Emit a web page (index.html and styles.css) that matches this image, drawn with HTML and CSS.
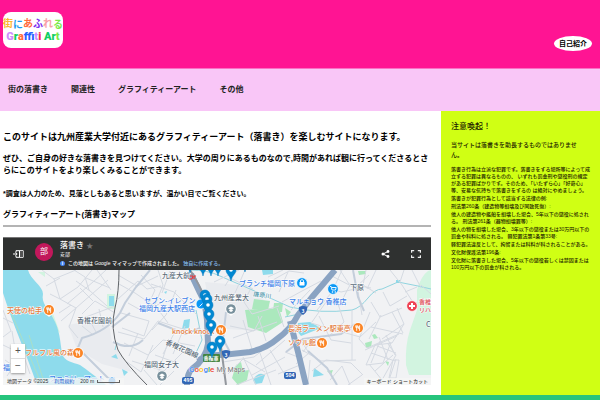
FILE: index.html
```html
<!DOCTYPE html>
<html lang="ja">
<head>
<meta charset="utf-8">
<meta name="viewport" content="width=device-width, initial-scale=1">
<title>街にあふれる Graffiti Art</title>
<link rel="stylesheet" href="styles.css">
</head>
<body>
<header class="site-header">
  <a class="logo" href="#">
    <span class="logo-ja"><span class="amber">街</span><span class="sky low">に</span><span class="coral">あ</span><span class="violet">ふ</span><span class="rose">れ</span><span class="lime low">る</span></span>
    <span class="logo-en"><span class="lilac">G</span><span class="green">r</span><span class="coral">a</span><span class="blue">ff</span><span class="orange">i</span><span class="lilac">t</span><span class="red">i</span> <span class="green">Ar</span><span class="lime">t</span></span>
  </a>
  <a class="profile" href="#">自己紹介</a>
</header>
<nav class="site-nav">
  <a href="#">街の落書き</a>
  <a href="#">関連性</a>
  <a href="#">グラフィティーアート</a>
  <a href="#">その他</a>
</nav>
<div class="columns">
  <main class="content">
    <h1>このサイトは九州産業大学付近にあるグラフィティーアート（落書き）を楽しむサイトになります。</h1>
    <p class="lead">ぜひ、ご自身の好きな落書きを見つけてください。大学の周りにあるものなので,時間があれば観に行ってくださるとさらにこのサイトをより楽しくみることができます。</p>
    <p class="note">*調査は人力のため、見落としもあると思いますが、温かい目でご覧ください。</p>
    <h2>グラフィティーアート(落書き)マップ</h2>
    <section class="map-frame">
      <div class="map-bar">
        <button class="icon-button" aria-label="凡例を表示">
          <svg width="11" height="8" viewBox="0 0 11 8"><path d="M3 .7h7.2v6.6H3V5.7M3 2.3V.7M6.5 1v6" fill="none" stroke="#fff"/><path d="M7 1h3v6H7z" fill="#555"/><path d="M0 4h4M2.5 2.3 4.2 4 2.5 5.7" fill="none" stroke="#fff"/></svg>
        </button>
        <span class="avatar">部</span>
        <div class="map-info">
          <div class="map-title">落書き <span class="star">★</span></div>
          <div class="map-owner">安部</div>
          <div class="map-made"><span class="info">i</span><span>この地図は Google マイマップで作成されました。 <a href="#">独自に作成する。</a></span></div>
        </div>
        <div class="map-actions">
          <button class="icon-button" aria-label="共有">
            <svg width="9" height="8" viewBox="0 0 9 8"><path d="M7 1.5 2 4l5 2.5" fill="none" stroke="#fff"/><g fill="#fff"><circle cx="7" cy="1.5" r="1.4"/><circle cx="2" cy="4" r="1.5"/><circle cx="7" cy="6.5" r="1.4"/></g></svg>
          </button>
          <button class="icon-button" aria-label="全画面">
            <svg width="10" height="8" viewBox="0 0 10 8"><path d="M.6 2.8V.6h2.6M6.8.6h2.6v2.2M9.4 5.2v2.2H6.8M3.2 7.4H.6V5.2" fill="none" stroke="#eee" stroke-width="1.2"/></svg>
          </button>
        </div>
      </div>
      <div class="map-view">
        <svg class="map" viewBox="3 270 428 115" preserveAspectRatio="xMidYMid slice" role="img" aria-label="落書きマップ">
          <defs>
            <g id="pin"><path d="M0 6C-1-0-5-1-5-5a5 5 0 0 1 10 0C5-1 1 0 0 6z" fill="#0288d1" stroke="#0277bd" stroke-width=".5"/><circle cy="-5" r="1.8" fill="#fff"/></g>
            <g id="food"><path d="M-3 4 0 7 3 4z" fill="#fff"/><circle r="5.8" fill="#fff"/><circle r="5" fill="#fb8526"/><path d="M-2.2-2.6v2h1.8v-2M-1.3-2.6v5.4M1.6 2.8v-5.2q-1.3.8-1.3 2.8h1.3" fill="none" stroke="#fff" stroke-width=".9"/></g>
            <g id="school"><path d="M-3 4 0 7 3 4z" fill="#fff"/><circle r="5.6" fill="#fff"/><circle r="4.8" fill="#78909c"/><path d="M-3-.8 0-2.6 3-.8 0 1zM-1.8.8v1.2L0 3l1.8-1V.8" fill="#fff"/></g>
          </defs>
          <path fill="#f1f2f4" d="M3 270h428v115H3z"/>
          <g fill="#e9ebef"><path d="M205 282l45 4 20 20-10 25-35-2-14-15z"/><path d="M68 325l40-8 4 25 20 30-30-8-25-15z"/></g>
          <g fill="#d2f4e0">
            <path d="M431 270v105l-22 0-3-10q-1-20 4-35l7-20 0-20q4-14 11-19z"/>
            <path d="M107 294h8v15h-8zM38 272l7 0v5zM43 305l8 3 9 25-5-5z"/>
          </g>
          <g fill="#abe8bd">
            <path d="M254 299l16 2-2 9-16-1zM274 303l9 0-1 9-9-1zM358 271h8v3l-7 1zM365 343l7-2-1 6-5 1zM372 335l3-1 3 4-4 1zM385 361l4 1-1 4zM245 310l34-2 4 14-17 11-18-6zM236 365l5-3 2 9 6-1-2 10-9 5-6-7zM327 371l6-1-2 5zM285 308l6 4-4 5z"/>
          </g>
          <g fill="#8edbec">
            <path d="M3 270h25c2 9 15 16 15 24-2 9 5 14 10 24 7 12 7 23 9 35 2 9 11 9 18 12 8 5 14 11 21 15l5 5H37C25 350 15 330 3 293z"/>
            <path d="M109 296h5v10h-5zM184 320l6-1-1 9-7 1zM262 270h11v4l-10 1zM253 380q5-9 12-5l-3 8-7 1zM298 323l12-1 11 6-20 8-4-5zM314 368l10 7-11 2zM396 280h4v3h-4zM111 357l5-3 2 5zM122 369l6 3-4 4zM164 292l3-1-1 3z"/>
          </g>
          <path class="river" d="M190 270q18 0 30 6l30 13 40 18q30 7 62 3 8-2 16-12 7-9 14-9l16-7 20 4 13 3M196 310l6 30-7 15M115 350q2-10 4-6M285 317l14-3"/>
          <path class="minor" d="M42 270l12 9 6 20 16 9-7 19 9 11M54 279l22-9M60 299l18-12 14-17M67 304l26-22 13-12M76 308l32-28M74 270l11 7 4 13 18 16M86 278l24 10M90 291l-14-10M93 301l-13-13M82 314l13-13 20 12M78 320l37-14M61 321l15-13M59 313l12-8M50 294l10 5M46 286l14-8M97 270l14 20M82 326l10 8M88 317l8 15M99 309l4 18"/>
          <path class="minor" d="M118 275l19 11 21-10M119 284l16 9 19 13M118 299l20-18 9 8 14-3M128 303l16 9 15-8M121 313l28 8-5 15-22-8M141 275l14 15-10 22M151 284l23 8 23 23M158 270l5 15-8 20 13 18M170 271l-8 22M176 290l-10 25-14 15M118 332l26 7 14-18 34 11M124 343l24 12 15-15 32 6M138 333l-9 23M153 345l-12 27-14-10M132 361l32 10 20-20M144 370l13 15M167 345l-9 29M176 330l-13 24M185 326l-12 28M177 363l-22-8M174 371l-14 14"/>
          <path class="minor" d="M214 282l25-12M225 286l5-8 23 11M235 293l10-23M268 277l15-7M264 285l25-14 15 2M279 292l9-20M282 302l20-11 19-10M291 310l19-20M250 290l-6 12 8 12 27-8M230 326l24 5 8-15M233 338l44-16M243 320l9 29M258 316l8 25M277 308l7 19M223 362l31-5 25-20M228 374l15-15 22 13M243 357l13 28M260 353l11 32M270 350l18 30M252 375l33-18M256 365l29-25M285 352l18 7M278 374l22-9M236 385l40-15"/>
          <path class="minor" d="M317 310l15-18 10-22M330 275l25 13 14-13M340 270l9 14 22 4M350 285l-11 21M327 287l14 5 19-4M366 270l-3 15 13 8M376 270l-9 19M390 270l12 15 12 19M404 270l-4 12M412 270l9 18M383 292l7 14 17-10M358 291l4 24M371 302l9 15 22-9M326 302l-14 20M338 304l6 18-16 15M352 310v50M311 323l49 14 16-15M319 316l12 24 20 3M370 312l-11 27 8 9 32-14M381 315l-12 24M392 312l11 21M397 308l7 16-22 15M404 324l-12 19-17 2M365 350l32-14M375 345l-9 20 17-2 8-21M380 341l-9 22M369 364l13 16 14-25-8-11M396 359l-8 24M393 360h6l-3 18h-7zM302 350l19 11 35-1M312 371l14-11 25 3 12 12M310 360l-2 23M314 337l-11 15M330 380l12-14 8 19M362 375l-14 10M300 339l9 14-13 11M371 327l32 7"/>
          <path class="minor" d="M377 346l19 7M379 337l9 23M386 335l9 20M371 353l24 8M375 371l18-16M421 285l10 9M405 292l12-5M3 310l8 21-8 6M3 345l21 10M12 331l5 30-10 15M3 318l10 5M20 345l10 29M5 360l17 12"/>
          <path class="road" d="M150 270l-14 17-11 16-5 10q-12 18-38 25l-5 12M112 327l18-14M78 348l35 35M286 352l17-13 38-5 14-10M308 351l19 17 10 17M353 270l5 27 6 14M158 323l28 11 14-6M230 352l-7-13 3-27M113 342q18 9 30-2"/>
          <path class="highway" d="M187 385q0-12 5-16 14-10 16-25l-1-24q-2-19-7-27l-9-19"/>
          <path class="highway" d="M198 361q8-7 24-6l28-3q17-4 27-13 14-10 21-24l15-19 22-26"/>
          <path class="highway" d="M290 321l8 31 8 33"/>
          <path class="green-line" d="M29 335l16 50M10 310l17 40 15 35"/>
          <path class="rail" d="M119 270q0 22-4 38-5 20 3 42 7 13 29 35"/>
          <path class="rail soft" d="M190 270q10 15 16 31M221 347l5 38"/>
          <g class="place">
            <text x="162" y="278">九産大前</text><text x="214" y="300">九州産業大</text><text x="350" y="290">下原</text>
            <text x="77" y="323">香椎花園前</text><text x="144" y="367">福岡女子大</text><text x="165" y="344" transform="rotate(24 165 344)">香椎花園線</text><text x="426" y="327">C</text>
          </g>
          <g class="shop">
            <text x="144" y="303">セブン-イレブン</text><text x="139" y="311">福岡九産大駅西店</text><text x="239" y="286">ブランチ福岡下原</text><text x="289" y="304">マルキョウ 香椎店</text><text x="3" y="370">福</text><text x="49" y="381">ファミリーマート</text>
          </g>
          <g class="eat">
            <text x="7" y="313">天使の柏手</text><text x="25" y="355">フルフル風の森</text><text x="172" y="334">knock knock</text><text x="288" y="331">長浜ラーメン駅東亭</text><text x="288" y="345">ソウル館</text>
          </g>
          <text class="river-name" x="253" y="296" transform="rotate(8 253 296)">唐原川</text>
          <g class="medical"><text x="419" y="304">香椎</text><text x="419" y="312">リハ</text></g>
          <use href="#food" x="49" y="310"/><use href="#food" x="78" y="353"/><use href="#food" x="221" y="330"/><use href="#food" x="358" y="328"/><use href="#food" x="322" y="343"/>
          <use href="#school" x="231" y="309"/><use href="#school" x="162" y="376"/>
          <g stroke="#fff" stroke-width=".8"><circle cx="302" cy="283" r="5.4" fill="#0a98f5"/><circle cx="333" cy="289" r="5.4" fill="#0a98f5"/><circle cx="201" cy="304" r="5" fill="#0a98f5"/><circle cx="412" cy="306" r="5.4" fill="#ee4254"/><circle cx="112" cy="381" r="4" fill="#1688e8"/></g>
          <path d="M299.500 282h5v3.500h-5zM411 303h2v2h2v2h-2v2h-2v-2h-2v-2h2z" fill="#fff"/>
          <path d="M300.500 282v-1.500q1.500-2 3 0v1.500M330 286.500h1.200l.8 3.500h3.500l.7-2.500H332M199.500 306.500l3-3" fill="none" stroke="#fff" stroke-width=".9"/>
          <g fill="#fff"><circle cx="332.500" cy="292" r=".8"/><circle cx="335.300" cy="292" r=".8"/></g>
          <path d="M190 276h3l-1 3h-3M194 279v-3h2" stroke="#e33" fill="none"/>
          <g fill="#3266b5"><path d="M222 351q4-2 8 0 1 5-4 8-5-3-4-8zM299 307q4-2 8 0 1 5-4 8-5-3-4-8z"/><rect x="182" y="377" width="12" height="7" rx="2"/><rect x="284" y="372" width="12" height="7" rx="2"/></g>
          <rect x="203" y="354" width="17" height="8" rx="1" fill="#438442"/>
          <g class="shield"><text x="226" y="357">3</text><text x="303" y="313">3</text><text x="188" y="382">495</text><text x="290" y="377">504</text><text x="211" y="360">香椎東</text></g>
          <use href="#pin" x="190" y="267"/><use href="#pin" x="203" y="270"/><use href="#pin" x="211" y="270"/><use href="#pin" x="218" y="270"/><use href="#pin" x="245" y="266"/><use href="#pin" x="231" y="275"/><use href="#pin" x="205" y="300"/><use href="#pin" x="207" y="304"/><use href="#pin" x="208" y="310"/><use href="#pin" x="209" y="319"/><use href="#pin" x="211" y="330"/><use href="#pin" x="220" y="346"/><use href="#pin" x="212" y="352"/>
        </svg>
        <div class="zoom"><button aria-label="拡大">+</button><button aria-label="縮小">−</button></div>
        <div class="brand"><span class="g-blue">G</span><span class="g-red">o</span><span class="g-yellow">o</span><span class="g-blue">g</span><span class="g-green">l</span><span class="g-red">e</span> <span class="my-maps">My Maps</span></div>
        <div class="legal"><span>地図データ ©2025</span><a href="#">利用規約</a><span>200 m</span><span class="scale"></span></div>
        <div class="shortcuts">キーボード ショートカット</div>
      </div>
    </section>
  </main>
  <aside class="warning">
    <h3>注意喚起！</h3>
    <p class="warning-lead">当サイトは落書きを助長するものではありませ<br>ん。</p>
    <div class="law">
      <p>落書き行為は立派な犯罪です。落書きをする場所等によって成立する犯罪は異なるものの、 いずれも罰金刑や懲役刑の規定がある犯罪ばかりです。そのため、「いたずら心」「好奇心」等、安易な気持ちで落書きをするの は絶対にやめましょう。</p>
      <p>落書きが犯罪行為として該当する法律の例:</p>
      <p>刑法第260条（建造物等損壊及び同致死傷）:</p>
      <p>他人の建造物や艦船を損壊した場合、5年以下の懲役に処される。 刑法第261条（器物損壊罪等）:</p>
      <p>他人の物を損壊した場合、3年以下の懲役または30万円以下の罰金や科料に処される。 軽犯罪法第1条第33号:</p>
      <p>軽犯罪法違反として、拘留または科料が科されることがある。</p>
      <p>文化財保護法第196条:</p>
      <p>文化財に落書きした場合、5年以下の懲役若しくは禁固または100万円以下の罰金が科される。</p>
    </div>
  </aside>
</div>
<footer class="site-footer"></footer>
</body>
</html>
```
FILE: styles.css
```css
* { box-sizing: border-box; margin: 0; padding: 0; }
body {
  min-height: 100vh;
  display: flex;
  flex-direction: column;
  background: #fff;
  color: #000;
  font-family: "Liberation Sans", "Noto Sans CJK JP", sans-serif;
}
a { color: inherit; text-decoration: none; }
button { border: 0; background: none; font: inherit; color: inherit; }
svg { display: block; }

.site-header {
  display: flex;
  justify-content: space-between;
  align-items: flex-start;
  padding: 12px 8px 17px 3px;
  background: #ff1493;
  border-bottom: 1px solid #fb6fc4;
}
.logo {
  width: 60px;
  height: 36px;
  padding-top: 6px;
  border-radius: 8px;
  background: #fff;
  text-align: center;
  white-space: nowrap;
}
.logo-ja { display: flex; justify-content: center; font-size: 10px; line-height: 12px; font-weight: 700; }
.logo-en { display: block; font-family: Roboto, sans-serif; font-size: 11px; line-height: 13px; font-weight: 900; }
.low { position: relative; top: 1px; }
.amber { color: #fdb62f; }
.sky { color: #1b9cf0; }
.coral { color: #ff6b3d; }
.violet { color: #7a2cf0; }
.rose { color: #f8a0a8; }
.lime { color: #7bea4a; }
.lilac { color: #cf8cff; }
.green { color: #10ce62; }
.blue { color: #2660ff; }
.orange { color: #ffa04a; }
.red { color: #ff2056; }
.profile {
  margin-top: 24px;
  padding: 0 5px;
  border-radius: 50%;
  background: #fff;
  font-size: 7px;
  line-height: 15px;
  font-weight: 700;
}
.site-nav {
  display: flex;
  gap: 23px;
  padding: 13px 8px;
  background: #f9c6f7;
  font-size: 8px;
  line-height: 16px;
  font-weight: 700;
  color: #222;
}
.columns { display: grid; grid-template-columns: 1fr 159px; }
.content { padding: 18px 10px 10px 3px; min-width: 0; }
h1 { font-size: 9px; line-height: 16px; margin-bottom: 8px; }
h2 { font-size: 8px; line-height: 12px; padding-bottom: 4px; margin-bottom: 10px; border-bottom: 2px solid #b4b4b4; }
.lead { font-size: 8px; line-height: 12px; font-weight: 700; margin-bottom: 12px; }
.note { font-size: 7px; line-height: 10px; font-weight: 700; margin-bottom: 10px; }

.map-bar {
  display: flex;
  align-items: center;
  padding: 0 10px;
  height: 33px;
  background: #2f3130;
  border-top: 1px solid #777;
  color: #fff;
}
.avatar {
  width: 18px;
  margin: 0 7px 4px 11px;
  border-radius: 50%;
  background: #c2185b;
  font-size: 8px;
  line-height: 18px;
  text-align: center;
}
.map-title { font-size: 8px; line-height: 11px; font-weight: 500; }
.star { color: #777; font-size: 7px; }
.map-owner { font-size: 5px; line-height: 7px; }
.map-made { display: flex; align-items: center; gap: 3px; font-size: 5px; line-height: 10px; font-weight: 500; }
.map-made a { color: #86bdf0; }
.info { width: 5px; border-radius: 50%; background: #4285f4; line-height: 5px; text-align: center; font-weight: 700; }
.map-actions { display: flex; gap: 21px; margin-left: auto; }
.map-view { position: relative; }
.map { width: 100%; height: auto; font-family: "Noto Sans CJK JP", sans-serif; }
.minor, .river, .road, .highway, .green-line, .rail { fill: none; }
.minor { stroke: #d5dae2; stroke-width: 1; }
.river { stroke: #91d4df; stroke-width: 1; }
.road { stroke: #c4cedb; stroke-width: 2; }
.highway { stroke: #8aa3c2; stroke-width: 6; }
.green-line { stroke: #a9dfc7; stroke-width: 1; }
.rail { stroke: #606468; stroke-width: 1; }
.rail.soft { stroke: #93979d; stroke-width: 2; }
.map text { font-size: 7px; font-weight: 500; paint-order: stroke; stroke: #fff; stroke-width: 1px; }
.map .place text { fill: #5b6c7a; }
.map .shop text { fill: #3c7ee8; }
.map .eat text { fill: #e2793b; }
.map .medical text { fill: #dc4b55; font-size: 6px; }
.map .river-name { fill: #4b93a8; font-size: 6px; }
.map .shield text { fill: #fff; stroke: none; font-size: 5px; text-anchor: middle; font-weight: 700; }
.zoom {
  position: absolute;
  left: 8px;
  bottom: 12px;
  width: 14px;
  background: #fff;
  box-shadow: 0 1px 2px #999;
}
.zoom button { display: block; width: 100%; font-size: 10px; line-height: 14px; color: #555; }
.zoom button + button { border-top: 1px solid #ddd; }
.brand {
  position: absolute;
  left: 50%;
  bottom: 9px;
  transform: translateX(-50%);
  font: 500 8px/11px Roboto, sans-serif;
  white-space: nowrap;
  text-shadow: 0 0 1px #fff, 0 0 1px #fff;
}
.g-blue { color: #4285f4; }
.g-red { color: #ea4335; }
.g-yellow { color: #fbbc05; }
.g-green { color: #34a853; }
.my-maps { color: #777; font-size: 7px; font-weight: 400; }
.legal, .shortcuts { position: absolute; bottom: 0; font-size: 5px; line-height: 7px; color: #333; background: rgba(245, 245, 245, .8); }
.legal { left: 0; display: flex; gap: 6px; padding: 0 4px; }
.legal a { color: #1a5fd0; }
.scale { width: 23px; height: 3px; margin: 2px 0 0 -3px; border: 1px solid #666; border-top: 0; }
.shortcuts { right: 0; padding: 0 3px; font-weight: 500; }

.warning { padding: 10px 8px 10px 10px; background: #d0ff14; color: #1c2200; }
.warning h3 { font-size: 8px; line-height: 12px; font-weight: 500; margin-bottom: 7px; }
.warning-lead { font-size: 6px; line-height: 10px; font-weight: 500; margin-bottom: 6px; }
.law { display: grid; gap: 1px; font-size: 5px; line-height: 7px; font-weight: 500; }
.site-footer { flex: 1; min-height: 5px; background: #26c47c; }
```
